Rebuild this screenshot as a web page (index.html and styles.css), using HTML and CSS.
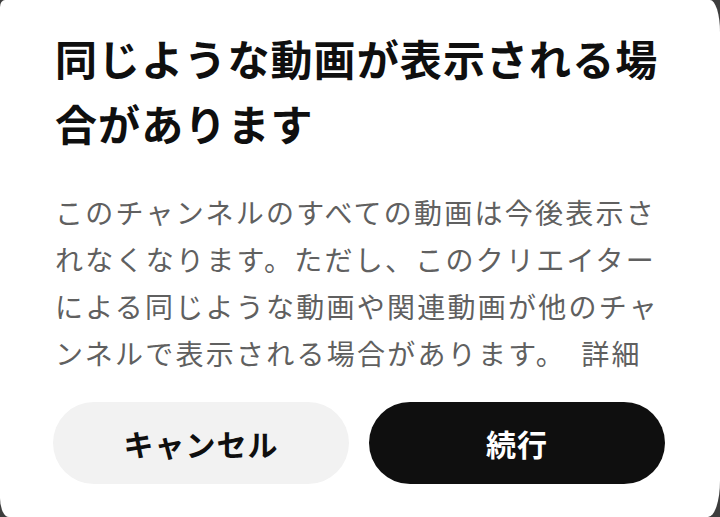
FILE: index.html
```html
<!DOCTYPE html>
<html lang="ja">
<head>
<meta charset="utf-8">
<title>Dialog</title>
<link rel="stylesheet" href="styles.css">
</head>
<body>
<div class="dialog">
  <h1 class="title">同じような動画が表示される場合があります</h1>
  <p class="message">このチャンネルのすべての動画は今後表示されなくなります。ただし、このクリエイターによる同じような動画や関連動画が他のチャンネルで表示される場合があります。 &#x2006;詳細</p>
  <div class="actions">
    <button class="btn btn-cancel">キャンセル</button>
    <button class="btn btn-continue">続行</button>
  </div>
</div>
</body>
</html>
```
FILE: styles.css
```css
html, body {
  margin: 0;
  padding: 0;
  background: #3d3d3d;
  width: 720px;
  height: 517px;
  overflow: hidden;
}
.dialog {
  box-sizing: border-box;
  width: 720px;
  height: 517px;
  background: #ffffff;
  border-top-left-radius: 5px 7px;
  border-top-right-radius: 10px 32px;
  border-bottom-right-radius: 12px 36px;
  border-bottom-left-radius: 9px 19px;
  padding: 25px 55px 0 53px;
  font-family: "Noto Sans CJK JP", "Noto Sans", sans-serif;
  display: flex;
  flex-direction: column;
}
.title {
  margin: 0 0 0 2px;
  font-size: 42px;
  line-height: 65px;
  letter-spacing: 1.1px;
  font-weight: 700;
  color: #0f0f0f;
}
.message {
  margin: 34px 0 0 2px;
  font-size: 28px;
  line-height: 47px;
  letter-spacing: 2.25px;
  color: #606060;
  font-weight: 400;
}
.actions {
  margin-top: 25px;
  display: flex;
  gap: 20px;
}
.btn {
  flex: 1;
  height: 82px;
  border: none;
  border-radius: 41px;
  font-family: "Noto Sans CJK JP", "Noto Sans", sans-serif;
  font-size: 30px;
  font-weight: 700;
  letter-spacing: 1px;
  padding: 0;
}
.btn-cancel {
  background: #f2f2f2;
  color: #0f0f0f;
}
.btn-continue {
  background: #0f0f0f;
  color: #ffffff;
}
```
